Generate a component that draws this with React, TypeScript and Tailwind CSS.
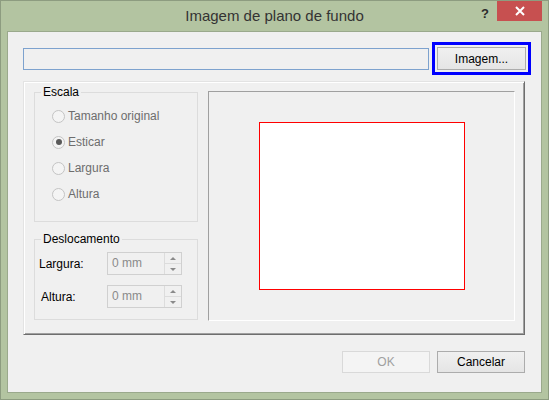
import React from "react";

const font = { fontFamily: '"Liberation Sans", Arial, sans-serif' };

type RadioProps = { label: string; checked?: boolean };

const Radio: React.FC<RadioProps> = ({ label, checked }) => (
  <div className="flex items-center h-[26px]">
    <span className="w-[13px] h-[13px] rounded-full border border-[#c4c4c4] bg-[#f4f4f4] flex items-center justify-center">
      {checked && <span className="w-[6px] h-[6px] rounded-full bg-[#5a5a5a]" />}
    </span>
    <span className="ml-[3px] text-[12px] text-[#6d6d6d]">{label}</span>
  </div>
);

const GroupBox: React.FC<{ title: string; className?: string; children: React.ReactNode }> = ({
  title,
  className,
  children,
}) => (
  <div className={"relative border border-[#dcdcdc] " + (className ?? "")}>
    <span className="absolute left-[6px] top-[-9px] px-[2px] bg-[#f0f0f0] text-[12px] leading-[16px] text-black">
      {title}
    </span>
    {children}
  </div>
);

const SpinField: React.FC<{ label: string; labelClass: string }> = ({ label, labelClass }) => (
  <div className="flex items-center">
    <span className={"text-[12px] text-black " + labelClass}>{label}</span>
    <div className="flex w-[75px] h-[23px] border border-[#d0d0d0] bg-[#f0f0f0]">
      <span className="flex-1 pl-[4px] text-[12px] leading-[21px] text-[#8a8a8a]">0 mm</span>
      <div className="w-[17px] flex flex-col border-l border-[#dcdcdc]">
        <span className="flex-1 flex items-center justify-center border-b border-[#dcdcdc]">
          <span className="w-0 h-0 border-l-[3px] border-r-[3px] border-b-[3px] border-l-transparent border-r-transparent border-b-[#8a8a8a]" />
        </span>
        <span className="flex-1 flex items-center justify-center">
          <span className="w-0 h-0 border-l-[3px] border-r-[3px] border-t-[3px] border-l-transparent border-r-transparent border-t-[#8a8a8a]" />
        </span>
      </div>
    </div>
  </div>
);

export default function App() {
  return (
    <div style={font} className="w-[549px] h-[400px] bg-[#b3c4a1] border border-[#8d9c80] flex flex-col">
      <div className="relative h-[30px] flex items-center justify-center">
        <span className="text-[15px] text-[#333333] mt-[1px]">Imagem de plano de fundo</span>
        <div className="absolute right-[6px] top-0 flex items-start">
          <span className="mt-[3px] mr-[8px] text-[13px] font-bold text-[#2b2b2b]">?</span>
          <span className="w-[45px] h-[20px] bg-[#c75050] flex items-center justify-center">
            <svg width="10" height="10" viewBox="0 0 10 10">
              <path d="M1 1L9 9M9 1L1 9" stroke="#fff" strokeWidth="2" />
            </svg>
          </span>
        </div>
      </div>

      <div className="mx-[6px] h-[362px] bg-[#f0f0f0] border border-[#9aa98c] flex flex-col">
        <div className="flex items-center mt-[15px] ml-[15px]">
          <div className="w-[406px] h-[22px] border border-[#7da2ce] bg-[#f0f0f0]" />
          <button className="ml-[8px] w-[89px] h-[23px] border border-[#acacac] bg-gradient-to-b from-[#f0f0f0] to-[#e5e5e5] text-[12px] text-black outline-[3px] outline-solid outline-[#0000ff] outline-offset-[2px]">
            Imagem...
          </button>
        </div>

        <div className="ml-[15px] mt-[11px] w-[502px] h-[254px] border-t border-l border-[#e3e3e3] border-r border-b border-r-[#6e6e6e] border-b-[#6e6e6e] shadow-[inset_1px_1px_0_#ffffff,inset_-1px_-1px_0_#a0a0a0] flex pl-[10px] pt-[9px]">
          <div className="flex flex-col pt-[1px]">
            <GroupBox title="Escala" className="w-[164px] h-[130px] pl-[17px] pt-[10px]">
              <Radio label="Tamanho original" />
              <Radio label="Esticar" checked />
              <Radio label="Largura" />
              <Radio label="Altura" />
            </GroupBox>
            <GroupBox title="Deslocamento" className="mt-[17px] w-[164px] h-[81px] pt-[12px]">
              <SpinField label="Largura:" labelClass="ml-[4px] w-[68px]" />
              <div className="mt-[10px]">
                <SpinField label="Altura:" labelClass="ml-[6px] w-[66px]" />
              </div>
            </GroupBox>
          </div>

          <div className="ml-[10px] w-[307px] h-[230px] border-t border-l border-[#a0a0a0] border-r border-b border-r-white border-b-white flex items-center justify-center">
            <div className="w-[206px] h-[168px] bg-white border border-[#ff0000]" />
          </div>
        </div>

        <div className="flex justify-end mt-[16px] mr-[16px] gap-[7px]">
          <button className="w-[88px] h-[22px] border border-[#d9d9d9] bg-[#f4f4f4] text-[12px] text-[#a0a0a0]">OK</button>
          <button className="w-[88px] h-[22px] border border-[#acacac] bg-gradient-to-b from-[#f0f0f0] to-[#e5e5e5] text-[12px] text-black">
            Cancelar
          </button>
        </div>
      </div>
    </div>
  );
}
